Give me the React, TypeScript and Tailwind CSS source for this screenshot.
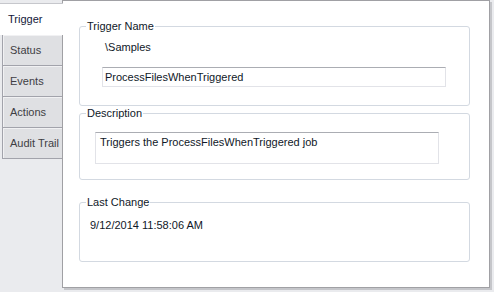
const tabs = ['Trigger', 'Status', 'Events', 'Actions', 'Audit Trail'];

function GroupBox({ title, className, children }: { title: string; className?: string; children: React.ReactNode }) {
  return (
    <fieldset className={`mx-[16px] mr-[19px] rounded-[3px] border border-[#d3d9e1] ${className ?? ''}`}>
      <legend className="ml-[6px] px-[1px] leading-[13px] text-[#101828]">{title}</legend>
      {children}
    </fieldset>
  );
}

export default function App() {
  return (
    <div
      className="flex h-[292px] w-[494px] bg-[#eaebee] text-[11px]"
      style={{ fontFamily: '"Liberation Sans", Arial, sans-serif' }}
    >
      {/* Tabs */}
      <div className="flex w-[62px] shrink-0 flex-col pt-[3px]">
        {tabs.map((t, i) =>
          i === 0 ? (
            <div
              key={t}
              className="relative z-10 -mr-px flex h-[32px] items-center border-t border-[#c6c7cc] bg-white pl-[8px] text-[#14183a]"
            >
              {t}
            </div>
          ) : (
            <div
              key={t}
              className="ml-[2px] flex h-[31px] items-center border-b border-l border-[#a2a3ab] bg-[#dfe0e3] pl-[7px] text-[#3e3e44] shadow-[inset_1px_1px_0_#f1f1f3]"
            >
              {t}
            </div>
          )
        )}
      </div>

      {/* Panel */}
      <div className="mb-[4px] mr-[4px] flex flex-1 flex-col border border-[#a0a0a4] bg-white pt-[19px] shadow-[2px_2px_0_#c5c6ca]">
        <GroupBox title="Trigger Name" className="pb-[18px]">
          <div className="ml-[25px] mt-[8px] leading-[13px] text-[#101828]">\Samples</div>
          <div className="ml-[22px] mr-[23px] mt-[13px] flex h-[20px] items-center border border-[#e2e3e8] border-t-[#abadb3] pl-[2px] text-[#101828]">
            ProcessFilesWhenTriggered
          </div>
        </GroupBox>

        <GroupBox title="Description" className="mt-px pb-[15px]">
          <div className="ml-[15px] mr-[30px] mt-[12px] h-[32px] border border-[#e2e3e8] border-t-[#abadb3] pl-[4px] pt-[3px] leading-[13px] text-[#101828]">
            Triggers the ProcessFilesWhenTriggered job
          </div>
        </GroupBox>

        <GroupBox title="Last Change" className="mt-[16px] pb-[29px]">
          <div className="ml-[10px] mt-[10px] leading-[13px] text-[#101828]">9/12/2014 11:58:06 AM</div>
        </GroupBox>
      </div>
    </div>
  );
}
